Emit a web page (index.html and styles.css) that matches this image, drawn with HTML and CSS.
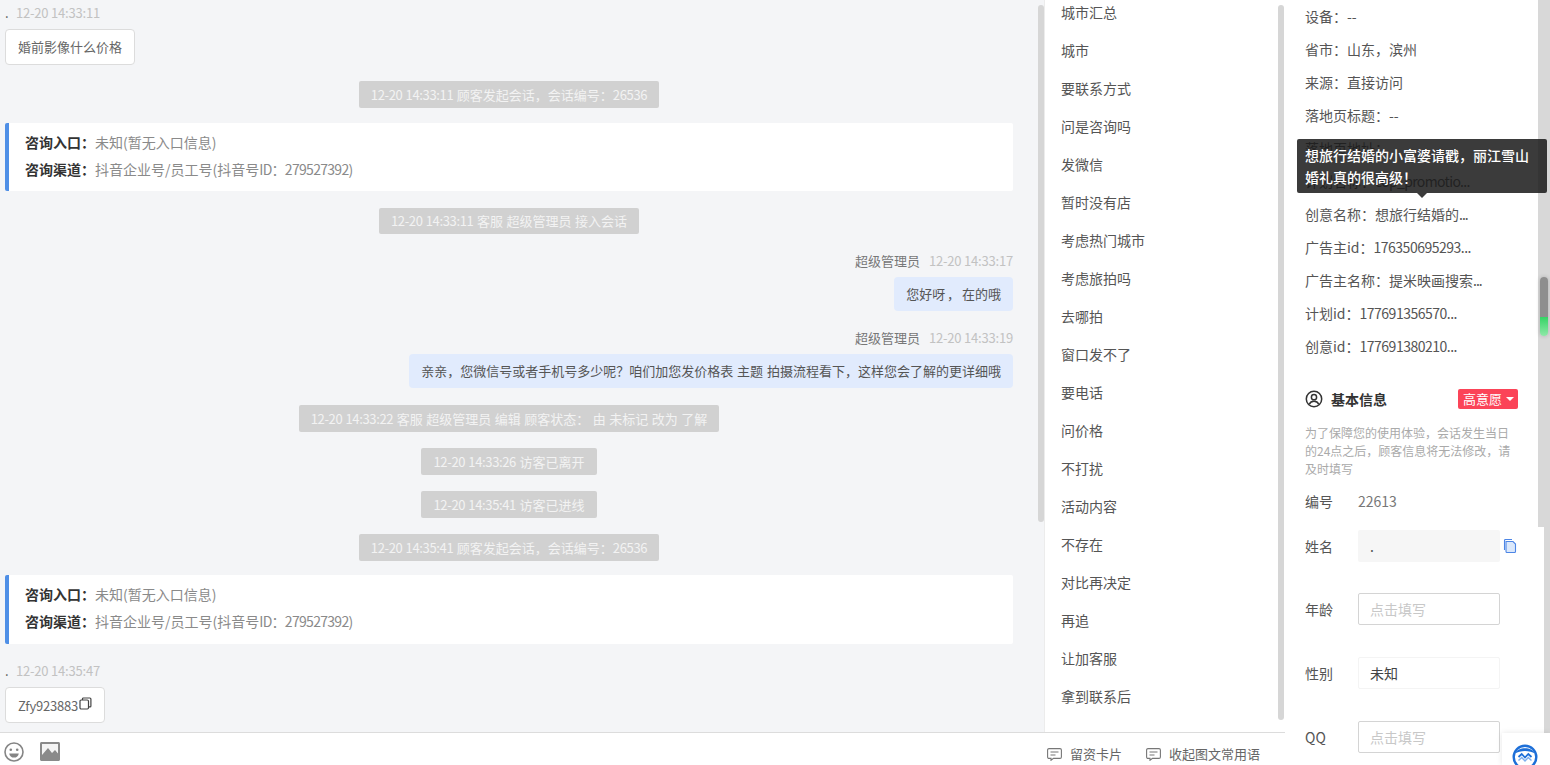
FILE: index.html
```html
<!DOCTYPE html>
<html lang="zh-CN">
<head>
<meta charset="utf-8">
<title>会话</title>
<link rel="stylesheet" href="styles.css">
</head>
<body>
<div class="app">
  <div class="workspace">
    <div class="upper">
      <section class="chat">
        <div class="messages">
          <div class="meta"><span class="dot">.</span><span class="time">12-20 14:33:11</span></div>
          <div class="bubble">婚前影像什么价格</div>
          <div class="pill"><span class="num">12-20 14:33:11</span> 顾客发起会话，会话编号：<span class="num">26536</span></div>
          <div class="card">
            <p><b>咨询入口：</b>未知(暂无入口信息)</p>
            <p><b>咨询渠道：</b>抖音企业号/员工号(抖音号<span class="tight">ID：279527392)</span></p>
          </div>
          <div class="pill pill-after-card"><span class="num">12-20 14:33:11</span> 客服 超级管理员 接入会话</div>
          <div class="agent agent-first"><span class="agent-name">超级管理员</span><span class="time">12-20 14:33:17</span></div>
          <div class="reply reply-short">您好呀 ， 在的哦</div>
          <div class="agent"><span class="agent-name">超级管理员</span><span class="time">12-20 14:33:19</span></div>
          <div class="reply">亲亲，您微信号或者手机号多少呢？咱们加您发价格表 主题 拍摄流程看下，这样您会了解的更详细哦</div>
          <div class="pill"><span class="num">12-20 14:33:22</span> 客服 超级管理员 编辑 顾客状态： 由 未标记 改为 了解</div>
          <div class="pill"><span class="num">12-20 14:33:26</span> 访客已离开</div>
          <div class="pill"><span class="num">12-20 14:35:41</span> 访客已进线</div>
          <div class="pill"><span class="num">12-20 14:35:41</span> 顾客发起会话，会话编号：<span class="num">26536</span></div>
          <div class="card card-tight">
            <p><b>咨询入口：</b>未知(暂无入口信息)</p>
            <p><b>咨询渠道：</b>抖音企业号/员工号(抖音号<span class="tight">ID：279527392)</span></p>
          </div>
          <div class="meta meta-late"><span class="dot">.</span><span class="time">12-20 14:35:47</span></div>
          <div class="bubble bubble-copy">Zfy923883<svg class="copy-mark" width="13" height="13" viewBox="0 0 13 13" fill="none" stroke="#444" stroke-width="1.2"><rect x="1" y="3" width="8.5" height="9" rx="1.2"/><path d="M3.5 3V1.8c0-.5.4-.8.8-.8h6.6c.5 0 1 .4 1 1v7c0 .5-.4 .9-.9 .9H9.5"/></svg></div>
        </div>
        <div class="track"><div class="thumb thumb-chat"></div></div>
      </section>
      <aside class="phrases">
        <ul class="phrase-list">
          <li>城市汇总</li><li>城市</li><li>要联系方式</li><li>问是咨询吗</li><li>发微信</li>
          <li>暂时没有店</li><li>考虑热门城市</li><li>考虑旅拍吗</li><li>去哪拍</li><li>窗口发不了</li>
          <li>要电话</li><li>问价格</li><li>不打扰</li><li>活动内容</li><li>不存在</li>
          <li>对比再决定</li><li>再追</li><li>让加客服</li><li>拿到联系后</li>
        </ul>
        <div class="track"><div class="thumb thumb-list"></div></div>
      </aside>
    </div>
    <footer class="toolbar">
      <div class="tools-left">
        <svg width="20" height="20" viewBox="0 0 20 20" fill="none"><circle cx="10" cy="10" r="9" stroke="#858585" stroke-width="1.6"/><circle cx="6.8" cy="7.8" r="1.3" fill="#858585"/><circle cx="13.2" cy="7.8" r="1.3" fill="#858585"/><path d="M5.2 11.4h9.6c-.3 2.7-2.3 4.2-4.8 4.2s-4.5-1.5-4.8-4.2z" fill="#858585"/></svg>
        <svg width="20" height="19" viewBox="0 0 20 19"><path d="M1.5 0h17c.8 0 1.5.7 1.5 1.5v16c0 .8-.7 1.500-1.500 1.500h-17C.7 19 0 18.300 0 17.500v-16C0 .7 .7 0 1.500 0z" fill="#8a8a8a"/><path d="M2 2h16v9.500l-3-3.500-3 3-4-5-6 7z" fill="#f4f4f4"/></svg>
      </div>
      <div class="tools-right">
        <span class="tool"><svg width="15" height="13" viewBox="0 0 15 13" fill="none" stroke="#777" stroke-width="1.100"><path d="M2 .6h11c.8 0 1.400 .6 1.400 1.400v7c0 .8-.6 1.400-1.400 1.400H6.500L4 12.300v-1.900H2C1.200 10.400 .6 9.800 .6 9V2C.6 1.200 1.200 .6 2 .6z"/><path d="M3.500 4h8M3.500 7h5"/></svg>留资卡片</span>
        <span class="tool"><svg width="15" height="13" viewBox="0 0 15 13" fill="none" stroke="#777" stroke-width="1.100"><path d="M2 .6h11c.8 0 1.400 .6 1.400 1.400v7c0 .8-.6 1.400-1.400 1.400H6.500L4 12.300v-1.900H2C1.200 10.400 .6 9.800 .6 9V2C.6 1.200 1.200 .6 2 .6z"/><path d="M3.500 4h8M3.500 7h5"/></svg>收起图文常用语</span>
      </div>
    </footer>
  </div>
  <aside class="panel">
    <ul class="facts">
      <li>设备：--</li><li>省市：山东，滨州</li><li>来源：直接访问</li><li>落地页标题：--</li>
      <li>落地页地址：</li><li>计划名称：<span class="squeeze-more">cop_promotio...</span></li><li>创意名称：想旅行结婚的<span class="dots">...</span></li>
      <li>广告主id：<span class="squeeze">176350695293...</span></li><li>广告主名称：提米映画搜索<span class="dots">...</span></li>
      <li>计划id：<span class="squeeze">177691356570...</span></li><li>创意id：<span class="squeeze">177691380210...</span></li>
    </ul>
    <div class="section-head">
      <svg width="18" height="18" viewBox="0 0 18 18" fill="none" stroke="#333" stroke-width="1.500"><circle cx="9" cy="9" r="7.700"/><circle cx="9" cy="7.200" r="2.600"/><path d="M4.300 14.200c.8-2 2.600-3 4.700-3s3.900 1 4.700 3"/></svg>
      <h3>基本信息</h3>
      <span class="intent">高意愿<i class="caret"></i></span>
    </div>
    <p class="notice">为了保障您的使用体验，会话发生当日的24点之后，顾客信息将无法修改，请及时填写</p>
    <div class="field field-id"><label>编号</label><span class="field-value">22613</span></div>
    <div class="field field-name"><label>姓名</label><span class="box box-locked">.</span>
      <svg class="doc" width="14" height="14" viewBox="0 0 14 14" fill="#dbe8fb" stroke="#4d86e6" stroke-width="1.100"><path d="M3 2.500h7l2.500 2.500v7.500c0 .6-.4 1-1 1H4c-.6 0-1-.4-1-1z"/><path d="M1.500 11V1.500c0-.5.4-1 1-1h6.500" fill="none"/></svg>
    </div>
    <div class="field"><label>年龄</label><span class="box box-empty">点击填写</span></div>
    <div class="field"><label>性别</label><span class="box box-soft">未知</span></div>
    <div class="field"><label>QQ</label><span class="box box-empty">点击填写</span></div>
  </aside>
  <div class="rail">
    <div class="rail-a"></div>
    <div class="rail-b"></div>
  </div>
  <div class="gauge"></div>
  <div class="tip">想旅行结婚的小富婆请戳，丽江雪山婚礼真的很高级！</div>
  <div class="widget">
    <svg width="26" height="26" viewBox="0 0 26 26" fill="none"><circle cx="13" cy="13" r="11.300" stroke="#1d6fd8" stroke-width="2.400"/><path d="M3 9.500C6 2.500 20 2.500 23 9.500 18 6 8 6 3 9.500z" fill="#1d6fd8"/><path d="M6.500 13l3.200-3 3.300 3.500 3.300-3.500 3.200 3" stroke="#1d6fd8" stroke-width="1.800"/><path d="M6.500 16.500l3.200-3 3.300 3.500 3.300-3.500 3.200 3" stroke="#7fb0ee" stroke-width="1.500"/></svg>
  </div>
</div>
</body>
</html>
```
FILE: styles.css
```css
* { box-sizing: border-box; }
html, body { margin: 0; padding: 0; height: 765px; overflow: hidden; background: #fff; }
body { font-family: "Noto Sans CJK SC", "Open Sans", sans-serif; font-size: 13px; color: #666; }
ul { list-style: none; margin: 0; padding: 0; }
p, h3 { margin: 0; }

.app { position: relative; display: flex; width: 1550px; height: 765px; overflow: hidden; }
.workspace { width: 1285px; height: 765px; display: flex; flex-direction: column; flex: none; }
.upper { display: flex; height: 732px; flex: none; overflow: hidden; }

.chat { width: 1044px; display: flex; background: #f4f5f7; flex: none; }
.messages { width: 1033px; flex: none; padding: 5px 20px 0 5px; display: flex; flex-direction: column; align-items: flex-start; }
.track { width: 7px; padding-top: 5px; flex: none; margin-left: 5px; }
.thumb { width: 6px; border-radius: 3px; background: #d6d6d6; }
.thumb-chat { height: 517px; }
.thumb-list { height: 715px; }

.meta { height: 16px; line-height: 16px; display: flex; }
.dot { width: 11px; color: #555; }
.time { color: #c2c2c2; letter-spacing: -.2px; }
.meta-late { margin-top: 19px; }
.bubble { margin-top: 8px; height: 36px; padding: 0 12px 1px; background: #fff; border: 1px solid #dcdcdc; border-radius: 4px; color: #666; display: flex; align-items: center; }
.bubble-copy { padding-bottom: 0; letter-spacing: -.2px; }
.copy-mark { margin-left: 1px; margin-top: -3px; }

.pill { align-self: center; margin-top: 16px; height: 27px; line-height: 27px; padding: 0 12px; background: #d1d1d1; color: #f3f3f3; border-radius: 2px; white-space: nowrap; word-spacing: .6px; }
.num { letter-spacing: -.35px; }
.pill-after-card { margin-top: 17px; height: 26px; line-height: 26px; }
.reply + .pill { margin-top: 17px; }

.card { width: 100%; height: 68px; margin-top: 15px; padding: 6px 0 0 16px; background: #fff; border-left: 4px solid #4f8fe6; border-radius: 2px; color: #8a8a8a; font-size: 14px; }
.card p { height: 27px; line-height: 27px; }
.card b { color: #333; font-weight: 700; }
.card-tight { margin-top: 14px; height: 69px; }
.tight { letter-spacing: -.7px; }

.agent { align-self: flex-end; margin-top: 19px; height: 16px; line-height: 16px; }
.agent-name { margin-right: 9px; color: #777; }
.reply { align-self: flex-end; margin-top: 8px; height: 34px; line-height: 34px; padding: 0 12px; background: #e1ebfd; color: #555; border-radius: 4px; white-space: nowrap; word-spacing: 1px; }
.reply-short { word-spacing: -1px; }

.phrases { width: 241px; display: flex; background: #fff; border-left: 1px solid #ececec; flex: none; }
.phrase-list { width: 228px; flex: none; padding: 0 0 0 16px; margin-top: -7px; }
.phrase-list li { height: 38px; line-height: 38px; font-size: 14px; color: #555; }

.toolbar { height: 33px; flex: none; border-top: 1px solid #dcdcdc; display: flex; justify-content: space-between; background: #fff; }
.tools-left { display: flex; gap: 16px; padding: 9px 0 0 4px; }
.tools-right { display: flex; gap: 24px; padding: 14px 25px 0 0; }
.tool { display: flex; align-items: center; gap: 8px; height: 14px; color: #666; line-height: 14px; }

.panel { width: 253px; height: 765px; flex: none; background: #fff; padding: 0 0 0 20px; overflow: hidden; }
.facts li { height: 33px; line-height: 33px; font-size: 14px; color: #555; white-space: nowrap; }
.squeeze { letter-spacing: -.5px; }
.squeeze-more { letter-spacing: -.65px; }
.dots { letter-spacing: -1px; }
.section-head { display: flex; align-items: center; height: 20px; margin-top: 26px; }
.section-head h3 { font-size: 14px; font-weight: 700; color: #333; margin-left: 8px; line-height: 20px; }
.intent { margin-left: 71px; width: 60px; height: 20px; line-height: 20px; background: #fb4458; color: #fff; border-radius: 2px; padding-left: 5px; display: flex; align-items: center; }
.caret { width: 0; height: 0; margin-left: 4px; border-left: 4px solid transparent; border-right: 4px solid transparent; border-top: 4px solid #fff; }
.notice { width: 212px; margin-top: 15px; font-size: 12px; line-height: 18px; color: #aaa; }

.field { display: flex; align-items: center; height: 32px; margin-top: 32px; position: relative; font-size: 14px; }
.field label { width: 53px; flex: none; color: #555; }
.field-id { margin-top: 7px; height: 32px; }
.field-value { color: #777; }
.field-name { margin-top: 13px; }
.field-name + .field { margin-top: 31px; }
.box { width: 142px; height: 32px; line-height: 30px; padding: 0 11px; border-radius: 2px; border: 1px solid transparent; }
.box-locked { background: #f6f6f6; color: #555; }
.box-empty { border-color: #d4d4d4; color: #c8c8c8; }
.box-soft { border-color: #f4f4f4; color: #444; }
.doc { margin-left: 3px; }

.rail { width: 12px; flex: none; display: flex; align-items: flex-start; }
.rail-a { width: 6px; height: 527px; background: #d8d8d8; }
.rail-b { width: 6px; height: 733px; background: #d8d8d8; }

.gauge { position: absolute; left: 1540px; top: 277px; width: 8px; height: 59px; border-radius: 4px; background: linear-gradient(#8e8e8e 0, #8e8e8e 67%, #35d465 68%, #8fe8a8 100%); box-shadow: 0 0 4px rgba(0,0,0,.2); }
.tip { position: absolute; left: 1297px; top: 139px; width: 250px; height: 54px; padding: 5px 8px; background: rgba(25,25,25,.85); color: #fff; font-size: 14px; font-weight: 500; line-height: 22px; border-radius: 2px; }
.tip::after { content: ""; position: absolute; left: 120px; bottom: -5px; border-left: 5px solid transparent; border-right: 5px solid transparent; border-top: 5px solid rgba(25,25,25,.85); }
.widget { position: absolute; left: 1502px; top: 733px; width: 48px; height: 32px; background: #fff; box-shadow: 0 0 6px rgba(0,0,0,.1); padding: 11px 0 0 10px; overflow: hidden; }
```
